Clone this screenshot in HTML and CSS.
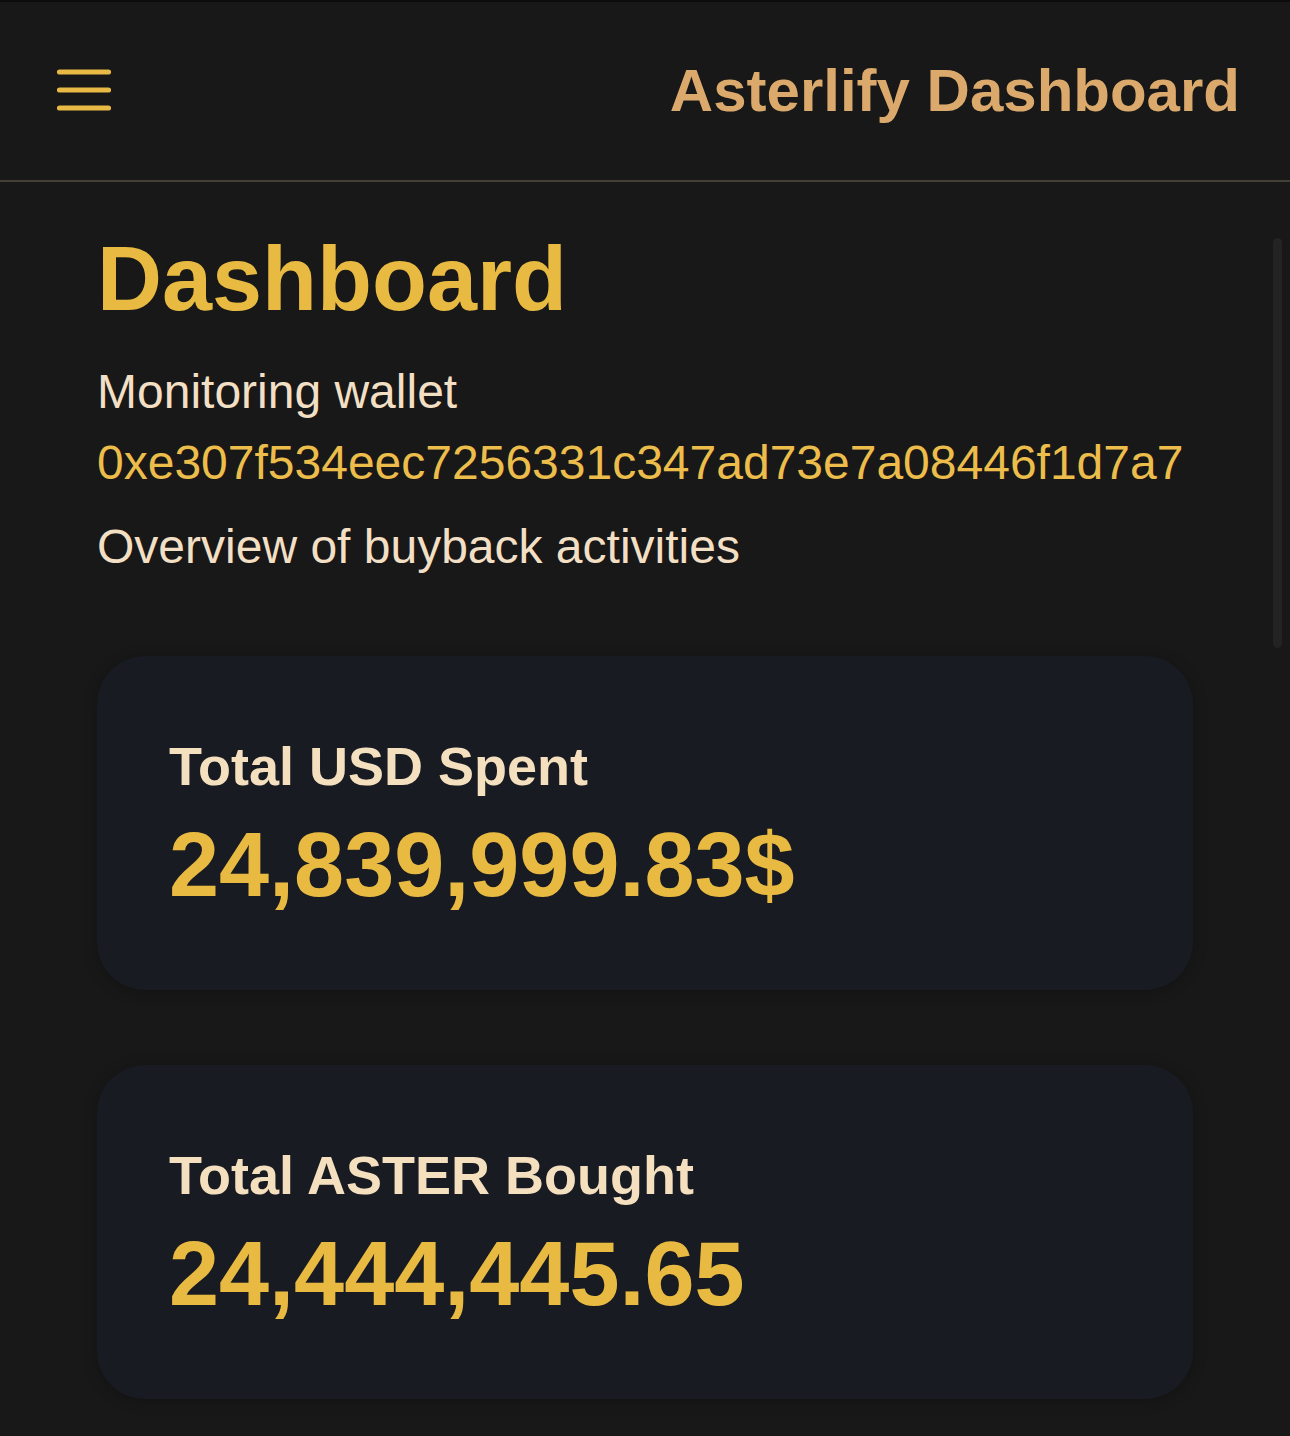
FILE: index.html
```html
<!DOCTYPE html>
<html lang="en">
<head>
<meta charset="utf-8">
<title>Asterlify Dashboard</title>
<link rel="stylesheet" href="styles.css">
</head>
<body>
<header class="topbar">
  <button class="menu-btn" aria-label="Menu">
    <svg width="54" height="44" viewBox="0 0 54 44">
      <path d="M2.5 3H51.5M2.5 21H51.5M2.5 39H51.5" stroke="#e8b944" stroke-width="5.2" stroke-linecap="round" fill="none"/>
    </svg>
  </button>
  <div class="brand">Asterlify Dashboard</div>
</header>
<main class="content">
  <h1 class="page-title">Dashboard</h1>
  <p class="wallet">Monitoring wallet <span class="address">0xe307f534eec7256331c347ad73e7a08446f1d7a7</span></p>
  <p class="subtitle">Overview of buyback activities</p>
  <section class="cards">
    <div class="card">
      <div class="card-label">Total USD Spent</div>
      <div class="card-value">24,839,999.83$</div>
    </div>
    <div class="card">
      <div class="card-label">Total ASTER Bought</div>
      <div class="card-value">24,444,445.65</div>
    </div>
  </section>
  <div class="scroll-thumb"></div>
</main>
</body>
</html>
```
FILE: styles.css
```css
* { box-sizing: border-box; }
html, body { margin: 0; padding: 0; }
body {
  background: #181818;
  font-family: "Liberation Sans", Arial, Helvetica, sans-serif;
  height: 1436px;
  overflow: hidden;
  border-top: 2px solid #0c0c0c;
}
.topbar {
  height: 180px;
  display: flex;
  align-items: center;
  justify-content: space-between;
  padding: 0 50px 0 57px;
  border-bottom: 2px solid #444038;
  background: #181818;
}
.menu-btn {
  background: none;
  border: 0;
  padding: 0;
  display: flex;
  margin-top: -1px;
}
.brand {
  color: #dba96c;
  font-weight: 700;
  font-size: 60px;
  line-height: 60px;
}
.content {
  position: relative;
  padding: 52px 97px 0;
}
.page-title {
  margin: 0;
  color: #e8ba42;
  font-size: 90px;
  font-weight: 700;
  line-height: 90px;
}
.wallet {
  margin: 32px 0 0;
  color: #f2dfc4;
  font-size: 48px;
  line-height: 71px;
}
.address { color: #ecbd4a; }
.subtitle {
  margin: 13px 0 0;
  color: #f2dfc4;
  font-size: 48px;
  line-height: 72px;
}
.cards {
  display: flex;
  flex-direction: column;
  gap: 75px;
  margin-top: 73px;
}
.card {
  background: #191b22;
  border-radius: 48px;
  padding: 78px 72px 71px;
  box-shadow: 0 2px 14px rgba(0,0,0,0.25);
  display: flex;
  flex-direction: column;
  gap: 12px;
}
.card-label {
  color: #f4dfbf;
  font-size: 54px;
  font-weight: 700;
  line-height: 65px;
}
.card-value {
  color: #e8ba42;
  font-size: 90px;
  font-weight: 700;
  line-height: 108px;
}
.scroll-thumb {
  position: absolute;
  right: 8px;
  top: 56px;
  width: 9px;
  height: 410px;
  border-radius: 5px;
  background: #232323;
}
```
